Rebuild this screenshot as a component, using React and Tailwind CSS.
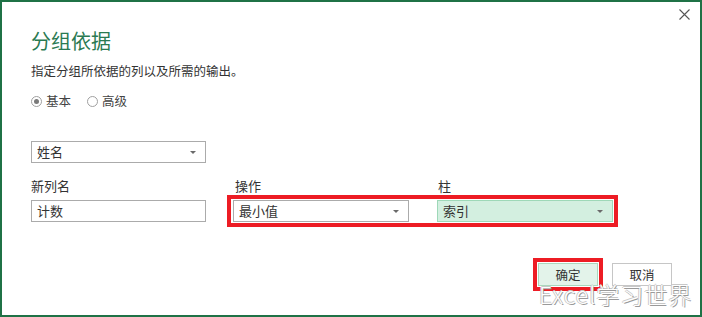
const FONT = "font-['Microsoft_YaHei','Noto_Sans_CJK_SC',sans-serif]";

function Arrow() {
  return (
    <svg width="6" height="3" viewBox="0 0 6 3" className="shrink-0">
      <path d="M0 0h6L3 3z" fill="#6a6a6a" />
    </svg>
  );
}

function Select({ value, width, green }) {
  return (
    <div
      className={`flex h-[22px] items-center justify-between border pl-[5px] pr-[9px] ${width} ${
        green ? "border-[#9ed8b8] bg-[#d3efe0]" : "border-[#ababab] bg-white"
      }`}
    >
      <span className="text-[13px] leading-4 text-[#333]">{value}</span>
      <Arrow />
    </div>
  );
}

function Radio({ checked, label }) {
  return (
    <label className="flex items-center gap-[4px]">
      <span className="flex h-[11px] w-[11px] items-center justify-center rounded-full border border-[#a0a0a0] bg-white">
        {checked ? <span className="h-[5px] w-[5px] rounded-full bg-[#7a7a7a]" /> : null}
      </span>
      <span className="text-[12.5px] leading-4 text-[#444]">{label}</span>
    </label>
  );
}

export default function App() {
  return (
    <div
      className={`relative flex h-[317px] w-[702px] flex-col overflow-hidden border-2 border-[#1f7246] bg-white pl-[29px] pr-[28px] ${FONT}`}
    >
      <button type="button" className="absolute right-[10px] top-[7px] p-0" aria-label="关闭">
        <svg width="11" height="11" viewBox="0 0 11 11">
          <path d="M0.5 0.5l10 10M10.5 0.5l-10 10" stroke="#555" strokeWidth="1.1" />
        </svg>
      </button>

      <h1 className="mt-[27px] text-[20px] font-normal leading-6 text-[#2a7a52]">分组依据</h1>
      <p className="mt-[10px] text-[12.5px] leading-4 text-[#333]">指定分组所依据的列以及所需的输出。</p>

      <div className="mt-[14px] flex h-4 items-center gap-[16px]">
        <Radio checked label="基本" />
        <Radio label="高级" />
      </div>

      <div className="mt-[32px]">
        <Select value="姓名" width="w-[175px]" />
      </div>

      <div className="mt-[15px] flex h-4 text-[13px] leading-4 text-[#333]">
        <span className="w-[204px]">新列名</span>
        <span className="w-[203px]">操作</span>
        <span>柱</span>
      </div>

      <div className="flex h-[34px] items-center">
        <div className="flex h-[22px] w-[175px] items-center border border-[#ababab] pl-[5px]">
          <span className="text-[13px] leading-4 text-[#333]">计数</span>
        </div>
        <div className="ml-[21px] flex items-center gap-[28px] border-4 border-[#ed1c24] py-[1px] pl-[2px] pr-[1px]">
          <Select value="最小值" width="w-[176px]" />
          <Select value="索引" width="w-[176px]" green />
        </div>
      </div>

      <div className="mt-[30px] flex items-start justify-end gap-[9px]">
        <div className="border-4 border-[#ed1c24] p-[1px]">
          <button
            type="button"
            className="flex h-[23px] w-[60px] items-center justify-center border border-[#a9d8bd] bg-[#e3f3ea] text-[12.5px] leading-4 text-[#333]"
          >
            确定
          </button>
        </div>
        <button
          type="button"
          className="mt-[5px] flex h-[23px] w-[60px] items-center justify-center border border-[#c6c6c6] bg-white text-[12.5px] leading-4 text-[#333]"
        >
          取消
        </button>
      </div>

      <div className="pointer-events-none absolute left-[537px] top-[281px] whitespace-nowrap text-[23px] font-light leading-[22px] tracking-[1px] text-white [text-shadow:1px_1px_0_#9a9a9a,-1px_0_0_#c8c8c8,0_-1px_0_#c8c8c8]">
        Excel学习世界
      </div>
    </div>
  );
}
